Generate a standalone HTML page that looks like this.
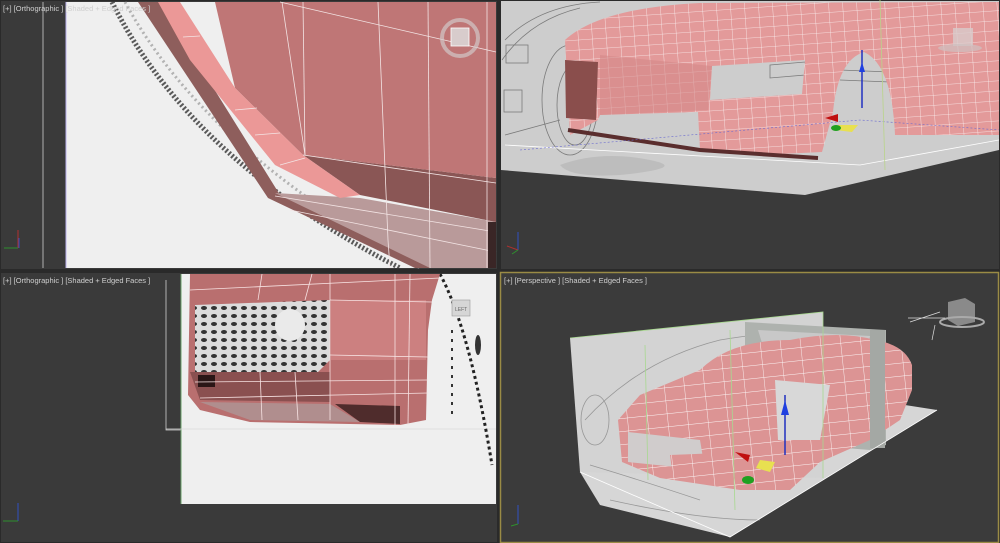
<!DOCTYPE html>
<html><head><meta charset="utf-8">
<style>
html,body{margin:0;padding:0;background:#2a2a2a;}
svg{display:block}
text{font-family:"Liberation Sans",sans-serif;font-size:7.5px;fill:#cfcfcf}
</style></head><body>
<svg width="1000" height="543" viewBox="0 0 1000 543" xmlns="http://www.w3.org/2000/svg">
<defs>
<pattern id="g" width="14" height="10" patternUnits="userSpaceOnUse" patternTransform="rotate(-4)">
<rect width="14" height="10" fill="#e39a9a"/>
<path d="M0 0H14M0 0V10" stroke="#fff" stroke-width="0.8" opacity="0.85"/>
</pattern>
<pattern id="g2" width="20" height="13" patternUnits="userSpaceOnUse" patternTransform="rotate(-6)">
<rect width="20" height="13" fill="#dc9494"/>
<path d="M0 0H20M0 0V13" stroke="#fff" stroke-width="0.9" opacity="0.9"/>
</pattern>
<pattern id="grille" width="10" height="8" patternUnits="userSpaceOnUse">
<rect width="10" height="8" fill="#dcdcdc"/>
<ellipse cx="4" cy="4" rx="3" ry="2" fill="#333"/>
</pattern>
</defs>

<rect x="0" y="0" width="1000" height="543" fill="#2a2a2a"/>
<rect x="1" y="1" width="496" height="268" fill="#3a3a3a"/>
<rect x="501" y="1" width="498" height="268" fill="#3a3a3a"/>
<rect x="1" y="273" width="496" height="269" fill="#3a3a3a"/>
<rect x="500.5" y="272.5" width="498" height="270" fill="#3b3b3b" stroke="#9a8b45" stroke-width="1.5"/>

<!-- TOP LEFT -->
<line x1="43" y1="2" x2="43" y2="268" stroke="#cfcfcf" stroke-width="0.8"/>
<rect x="66" y="2" width="430" height="266" fill="#efefef"/>
<line x1="66" y1="2" x2="66" y2="268" stroke="#b9b0ee" stroke-width="1"/>
<path d="M112 2 Q190 160 400 268" stroke="#333" stroke-width="5" fill="none" stroke-dasharray="2 2" opacity="0.8"/>
<path d="M125 2 Q205 150 420 268" stroke="#888" stroke-width="3" fill="none" stroke-dasharray="2 3" opacity="0.6"/>
<polygon points="138,2 160,2 280,195 440,268 415,268 268,198" fill="#8e5e5c"/>
<polygon points="275,193 360,198 496,222 496,268 430,268" fill="#b99a9a"/>
<polygon points="303,155 360,195 496,222 496,178" fill="#8a5655"/>
<polygon points="215,2 496,2 496,178 303,155 235,88" fill="#bf7676"/>
<polygon points="158,2 180,2 235,88 303,155 360,195 340,198 275,165 190,60" fill="#eb9897"/>
<g stroke="#f3e4e4" stroke-width="0.8" fill="none">
<path d="M282 2 L305 155"/><path d="M303 2 L305 155"/><path d="M378 2 L388 240 L390 268"/><path d="M428 2 L430 268"/><path d="M487 2 L487 268"/>
<path d="M280 2 L496 52"/><path d="M303 155 L496 183"/><path d="M275 196 L496 232"/><path d="M290 210 L496 252"/>
<path d="M183 37 L200 36"/><path d="M235 110 L257 108"/><path d="M255 135 L280 133"/><path d="M280 165 L305 158"/>
</g>
<rect x="488" y="222" width="8" height="46" fill="#3a2626"/>
<circle cx="460" cy="38" r="18" fill="none" stroke="#d2c8c8" stroke-width="4" opacity="0.7"/>
<rect x="451" y="28" width="18" height="18" fill="#d8cccc" stroke="#fff" stroke-width="0.8"/>
<text x="3" y="11">[+] [Orthographic ] [Shaded + Edged Faces ]</text>
<g><line x1="18" y1="248" x2="18" y2="230" stroke="#b03030"/><line x1="18" y1="248" x2="4" y2="248" stroke="#2f8f2f"/><line x1="19" y1="248" x2="19" y2="238" stroke="#3050c0"/></g>

<!-- TOP RIGHT -->
<polygon points="501,1 999,1 999,150 805,195 501,170" fill="#cdcdcd"/>
<path d="M560 165 Q600 150 650 160 Q690 168 620 175 Q570 178 560 165Z" fill="#bdbdbd"/>
<g stroke="#666" stroke-width="0.8" fill="none" opacity="0.8">
<path d="M505 40 Q540 5 600 2"/><path d="M502 60 Q530 20 580 8"/><path d="M505 135 L560 120"/>
<ellipse cx="570" cy="100" rx="28" ry="55"/><ellipse cx="575" cy="105" rx="18" ry="40"/>
<rect x="504" y="90" width="18" height="22"/><rect x="506" y="45" width="22" height="18"/>
<path d="M770 65 L805 62 L805 75 L770 78Z"/>
<path d="M840 70 L890 72 M840 80 L890 82"/>
</g>
<path fill-rule="evenodd" fill="url(#g)" d="M565 40 Q600 8 700 3 L999 2 L999 135 L895 135 Q892 65 864 52 Q838 60 833 112 L822 152 L760 155 L700 150 L698 112 L600 115 L598 120 L570 135 Z M712 66 L805 60 L802 94 L710 100 Z"/>
<polygon points="600,55 712,66 708,110 600,115" fill="#d48888" opacity="0.6"/>
<polygon points="565,60 598,62 596,120 566,118" fill="#8a4e4c"/>
<path d="M568 130 L700 150 L818 158" stroke="#5a2d2d" stroke-width="4" fill="none"/>
<path d="M505 145 L860 165 L999 140" stroke="#fff" stroke-width="0.8" fill="none"/>
<path d="M520 150 L860 120 L999 130" stroke="#6a6ad0" stroke-width="0.6" fill="none" stroke-dasharray="2 2"/>
<line x1="880" y1="0" x2="885" y2="170" stroke="#b9d48a" stroke-width="0.8"/>
<line x1="862" y1="50" x2="862" y2="108" stroke="#2030c0" stroke-width="1.5"/>
<polygon points="859,72 865,72 862,62" fill="#2040e0"/>
<polygon points="825,118 838,114 838,122" fill="#c01010"/>
<polygon points="838,125 858,125 852,132 835,130" fill="#e8e050"/>
<ellipse cx="836" cy="128" rx="5" ry="3" fill="#20a020"/>
<rect x="953" y="28" width="20" height="18" fill="#d8caca" opacity="0.8"/>
<ellipse cx="960" cy="48" rx="22" ry="4" fill="#cfc0c0" opacity="0.7"/>
<g><line x1="518" y1="250" x2="518" y2="232" stroke="#3050c0"/><line x1="518" y1="250" x2="507" y2="246" stroke="#b03030"/><line x1="518" y1="250" x2="512" y2="254" stroke="#2f8f2f"/></g>

<!-- BOTTOM LEFT -->
<text x="3" y="283">[+] [Orthographic ] [Shaded + Edged Faces ]</text>
<path d="M166 280 L166 430 L182 430" stroke="#cfcfcf" stroke-width="0.8" fill="none"/>
<rect x="181" y="274" width="315" height="230" fill="#efefef"/>
<line x1="181" y1="274" x2="181" y2="504" stroke="#6aa06a" stroke-width="1"/>
<line x1="166" y1="429" x2="496" y2="429" stroke="#dadada" stroke-width="0.8"/>
<path d="M440 274 Q470 330 492 465" stroke="#222" stroke-width="3" fill="none" stroke-dasharray="3 3"/>
<path d="M452 330 L452 420" stroke="#333" stroke-width="2" stroke-dasharray="3 6"/>
<ellipse cx="478" cy="345" rx="3" ry="10" fill="#333"/>
<polygon points="190,274 440,274 432,300 428,330 426,420 400,425 250,422 200,410 188,395" fill="#b96f6f"/>
<polygon points="331,300 426,300 426,360 331,360" fill="#cc8080"/>
<polygon points="190,372 330,372 330,402 200,400" fill="#8a5050"/>
<polygon points="200,402 330,404 360,422 250,420" fill="#b08e8e"/>
<polygon points="335,404 400,406 400,424 360,422" fill="#4f2c2c"/>
<polygon points="195,305 330,300 330,360 318,372 195,372" fill="url(#grille)"/>
<ellipse cx="290" cy="325" rx="15" ry="16" fill="#eaeaea"/>
<rect x="198" y="375" width="17" height="12" fill="#2a1616"/>
<g stroke="#f7e2e2" stroke-width="0.8" fill="none">
<path d="M190 290 L440 278"/><path d="M330 300 L432 302"/><path d="M330 355 L428 357"/><path d="M195 382 L428 380"/><path d="M200 398 L428 393"/>
<path d="M262 274 L258 300"/><path d="M312 274 L305 300"/><path d="M330 274 L330 420"/><path d="M395 274 L395 425"/><path d="M410 274 L408 425"/>
<path d="M260 372 L262 420"/><path d="M295 372 L298 420"/>
</g>
<rect x="452" y="300" width="18" height="16" fill="#d6d6d6" stroke="#999" stroke-width="0.6"/>
<text x="455" y="311" style="font-size:5px;fill:#666">LEFT</text>
<g><line x1="18" y1="521" x2="18" y2="503" stroke="#3050c0"/><line x1="18" y1="521" x2="3" y2="521" stroke="#2f8f2f"/></g>

<!-- BOTTOM RIGHT -->
<text x="504" y="283">[+] [Perspective ] [Shaded + Edged Faces ]</text>
<polygon points="580,472 905,405 937,410 730,537 600,505" fill="#d6d6d6"/>
<polygon points="570,338 823,312 823,478 580,472" fill="#d3d3d3"/>
<g stroke="#888" stroke-width="0.8" fill="none" opacity="0.8">
<path d="M585 420 Q640 360 720 340 Q780 330 820 332"/>
<ellipse cx="595" cy="420" rx="14" ry="25"/><path d="M590 465 Q640 480 700 500"/>
<path d="M610 500 Q700 520 760 520"/>
</g>
<polygon points="745,322 886,330 886,445 870,450 745,440" fill="#aeb2ae"/>
<polygon points="758,330 870,336 860,392 775,385" fill="#c8c8c8"/>
<path d="M700 370 Q730 340 790 340 Q840 330 875 340 Q905 345 912 365 L912 390 L900 420 L870 440 L820 462 L790 490 L740 490 L660 478 L622 462 L618 420 L640 395 Z" fill="url(#g2)"/>
<polygon points="628,432 700,440 705,470 628,462" fill="#d0cccc"/>
<polygon points="670,455 745,452 740,470 672,470" fill="url(#g2)"/>
<polygon points="775,380 830,385 820,440 778,440" fill="#d8d8d8"/>
<rect x="870" y="330" width="15" height="118" fill="#a4a8a4"/>
<path d="M580 472 L730 537 L937 410" stroke="#fff" stroke-width="0.8" fill="none"/>
<g stroke="#a8d890" stroke-width="0.8" fill="none"><path d="M570 338 L823 312 L823 478"/><path d="M645 345 L648 480"/><path d="M730 330 L735 510"/></g>
<line x1="785" y1="395" x2="785" y2="455" stroke="#2030c0" stroke-width="1.5"/>
<polygon points="781,415 789,415 785,400" fill="#2040e0"/>
<polygon points="735,452 750,455 748,462" fill="#c01010"/>
<polygon points="760,460 775,462 770,472 756,468" fill="#e8e050"/>
<ellipse cx="748" cy="480" rx="6" ry="4" fill="#20a020"/>
<polygon points="948,302 965,298 975,304 975,322 958,326 948,320" fill="#8a8a8a"/>
<ellipse cx="962" cy="322" rx="22" ry="5" fill="none" stroke="#aaa" stroke-width="2"/>
<path d="M908 318 L945 318 M935 325 L932 340 M910 322 L940 312" stroke="#ddd" stroke-width="0.7"/>
<g><line x1="518" y1="524" x2="518" y2="505" stroke="#3050c0"/><line x1="518" y1="524" x2="511" y2="526" stroke="#2f8f2f"/></g>
</svg>
</body></html>
